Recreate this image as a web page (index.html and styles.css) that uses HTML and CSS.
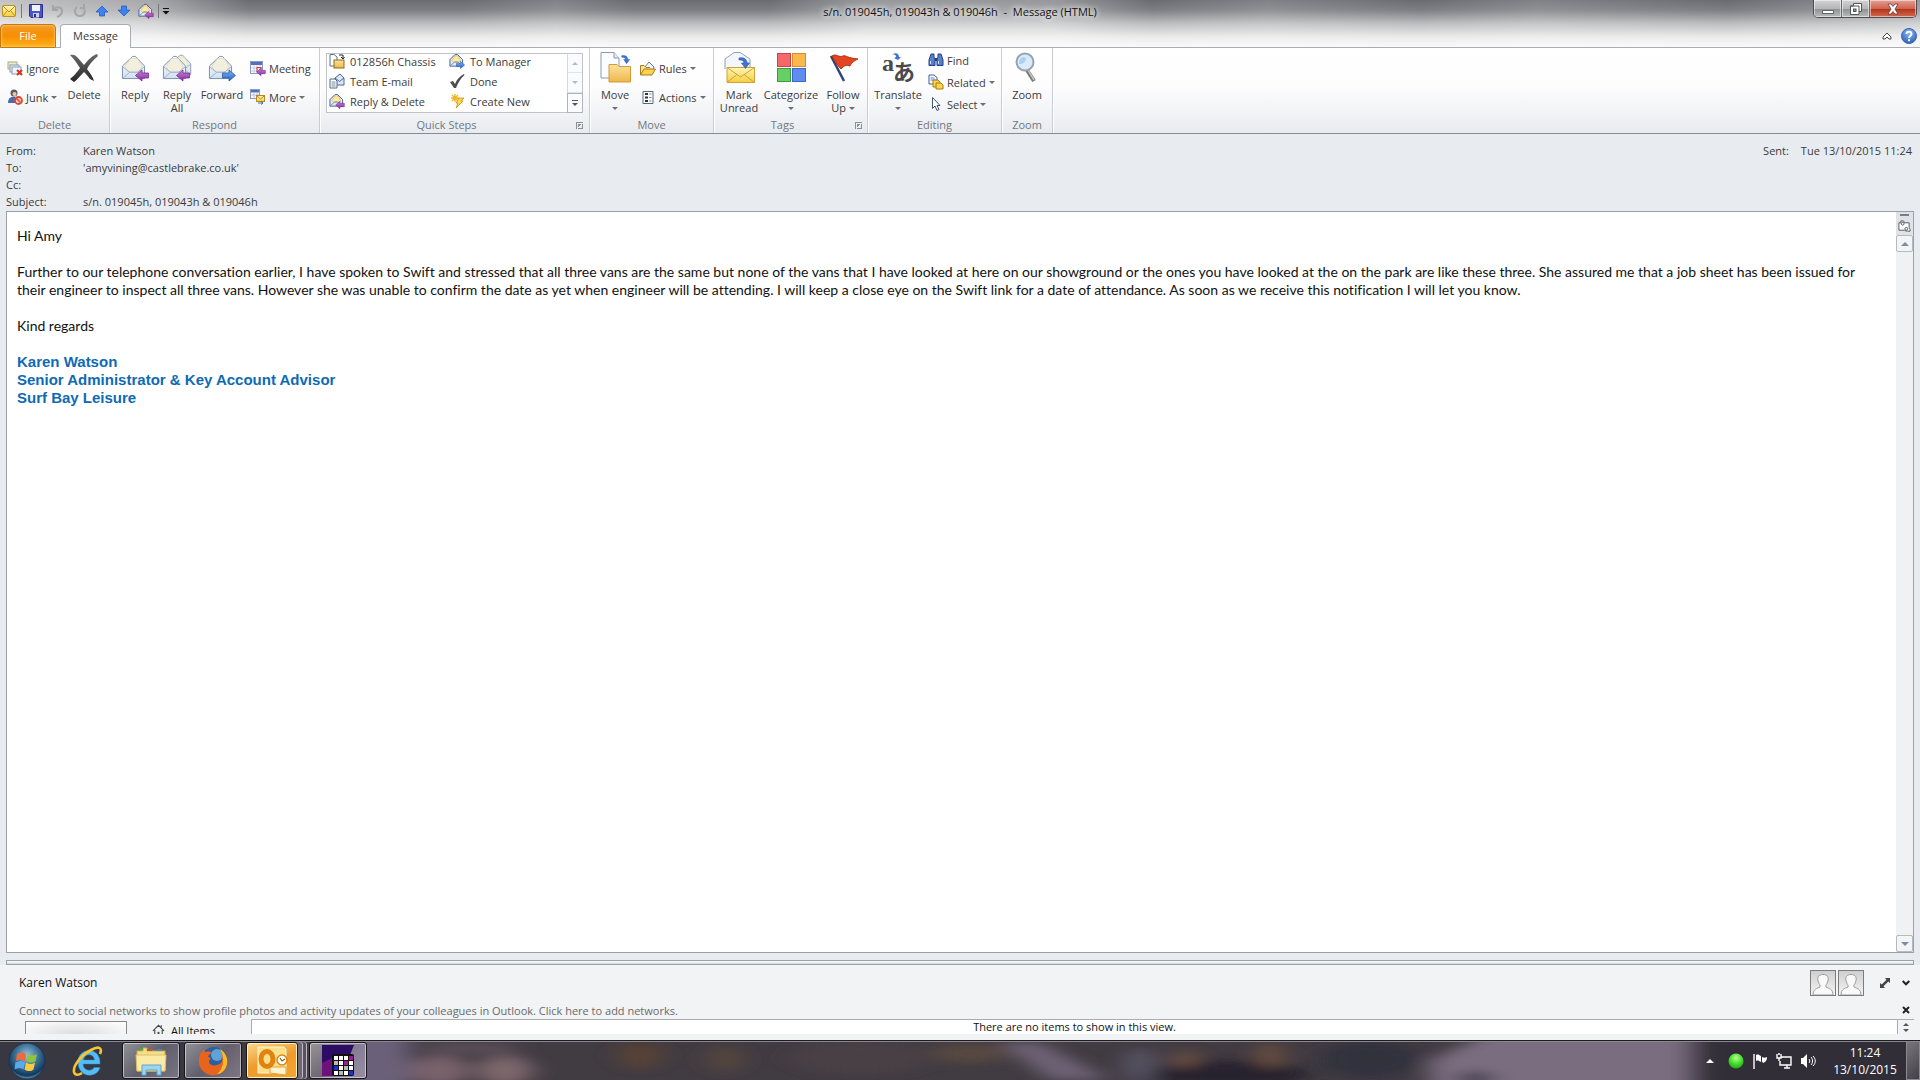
FILE: index.html
```html
<!DOCTYPE html>
<html lang="en">
<head>
<meta charset="utf-8">
<title>s/n. 019045h, 019043h &amp; 019046h - Message (HTML)</title>
<link rel="stylesheet" href="styles.css">
</head>
<body>
<svg class="defs" aria-hidden="true">
  <defs>
    <linearGradient id="gFold" x1="0" y1="0" x2="0" y2="1"><stop offset="0" stop-color="#fde39d"/><stop offset="1" stop-color="#efb64c"/></linearGradient>
    <linearGradient id="gEnv" x1="0" y1="0" x2="0" y2="1"><stop offset="0" stop-color="#ffffff"/><stop offset="1" stop-color="#cfe0f2"/></linearGradient>
    <linearGradient id="gYel" x1="0" y1="0" x2="0" y2="1"><stop offset="0" stop-color="#fff6b8"/><stop offset="1" stop-color="#f6cf3c"/></linearGradient>
    <linearGradient id="gPur" x1="0" y1="0" x2="0" y2="1"><stop offset="0" stop-color="#c77fd6"/><stop offset="1" stop-color="#8d2fa6"/></linearGradient>
    <linearGradient id="gBlu" x1="0" y1="0" x2="0" y2="1"><stop offset="0" stop-color="#7fb2f2"/><stop offset="1" stop-color="#2a62c4"/></linearGradient>
    <linearGradient id="gX" x1="0" y1="0" x2="0" y2="1"><stop offset="0" stop-color="#6b6b6b"/><stop offset="1" stop-color="#262626"/></linearGradient>
    <radialGradient id="gOrb" cx=".5" cy=".35" r=".65"><stop offset="0" stop-color="#9fc3d6"/><stop offset=".5" stop-color="#3b7096"/><stop offset=".85" stop-color="#14385c"/><stop offset="1" stop-color="#5aa5c8"/></radialGradient>
    <radialGradient id="gGreen" cx=".5" cy=".3" r=".7"><stop offset="0" stop-color="#b4ff8c"/><stop offset=".6" stop-color="#3fdc28"/><stop offset="1" stop-color="#25a816"/></radialGradient>
    <radialGradient id="gHelp" cx=".5" cy=".3" r=".7"><stop offset="0" stop-color="#8fb8f2"/><stop offset="1" stop-color="#2b62bd"/></radialGradient>
    <linearGradient id="gPerson" x1="0" y1="0" x2="0" y2="1"><stop offset="0" stop-color="#cfcfcf"/><stop offset="1" stop-color="#f4f4f4"/></linearGradient>
    <symbol id="openEnv" viewBox="0 0 26 26">
      <path d="M1.500 11.500 L12 1.500 H15 L24.500 11.500 V24.500 H1.500Z" fill="url(#gEnv)" stroke="#7d8fa6"/>
      <path d="M4 12 L10 3.500 H17 L22 12 L19 17 H7Z" fill="#f3efdf" stroke="#d5cdb4" stroke-width=".6"/>
      <path d="M1.500 12 L9 18 H17 L24.500 12 M1.500 24.500 L9 18 M24.500 24.500 L17 18" fill="none" stroke="#9fb0c6"/>
    </symbol>
    <symbol id="arrL" viewBox="0 0 14 12"><path d="M.5 6 L7 .5 V3.500 H13.500 V8.500 H7 V11.500Z" fill="url(#gPur)" stroke="#7a2a92" stroke-width=".8"/></symbol>
    <symbol id="arrR" viewBox="0 0 14 12"><path d="M13.500 6 L7 .5 V3.500 H.5 V8.500 H7 V11.500Z" fill="url(#gBlu)" stroke="#2a59ae" stroke-width=".8"/></symbol>
    <symbol id="curve" viewBox="0 0 12 12"><path d="M1 1 C6 0 9 2 9 6 H11.500 L7.500 11.500 L3.500 6 H6 C6 4 4 2.500 1 3Z" fill="#3f74d2" stroke="#2b56a8" stroke-width=".6"/></symbol>
    <symbol id="smEnv" viewBox="0 0 16 16">
      <path d="M1 7 L6.500 1.500 H9 L14.500 7 V14 H1Z" fill="#e3edf9" stroke="#3f5e93"/>
      <path d="M3 8 L6.500 3 H9.500 L12.500 8 L10 10 H5Z" fill="#ffe9a0" stroke="#c9a648" stroke-width=".6"/>
      <path d="M1 14 L6 9.500 H9.500 L14.500 14" fill="none" stroke="#6f8cb8"/>
    </symbol>
    <symbol id="person" viewBox="0 0 24 24"><path d="M2 24 C2 18 6 17.500 9 16 C9.500 15 9 14 8 12.500 C5 6 8 3.500 12 3.500 S19 6 16 12.500 C15 14 14.500 15 15 16 C18 17.500 22 18 22 24Z" fill="#f9f9f9" stroke="#9a9a9a"/></symbol>
  </defs>
</svg>

<header class="titlebar">
  <div class="caption">
    <div class="qat">
      <svg class="i14" viewBox="0 0 14 12"><rect x=".5" y=".5" width="13" height="11" rx="1" fill="url(#gYel)" stroke="#c08f1c"/><path d="M1 1 L7 7 L13 1 M1 11 L5 6 M13 11 L9 6" fill="none" stroke="#c08f1c"/></svg>
      <span class="vsep"></span>
      <button class="q" aria-label="Save"><svg viewBox="0 0 14 14"><path d="M.5 .5 H13.500 V13.500 H2 L.5 12Z" fill="#4c55c4" stroke="#2a2f8c"/><rect x="3" y="1" width="8" height="6" fill="#eef3fb"/><rect x="4" y="9" width="6" height="4.500" fill="#c7cdea"/><rect x="5" y="10" width="2" height="3" fill="#2a2f8c"/></svg></button>
      <button class="q" aria-label="Undo"><svg viewBox="0 0 14 14"><path d="M2 1 V6 H7 M2.500 5.500 C6 2 11 3 11 7 C11 10 9 12 6 13" fill="none" stroke="#a3a5a9" stroke-width="2"/></svg></button>
      <button class="q" aria-label="Redo"><svg viewBox="0 0 14 14"><path d="M4 3 C0 6 2 12 7 12 S13 6 10 3 M7 4 H11 V0" fill="none" stroke="#a3a5a9" stroke-width="2"/></svg></button>
      <button class="q" aria-label="Previous item"><svg viewBox="0 0 14 14"><path d="M7 2 L13 8 H9.500 V12 H4.500 V8 H1Z" fill="#3d82ee" stroke="#1f56b8" stroke-width=".7"/></svg></button>
      <button class="q" aria-label="Next item"><svg viewBox="0 0 14 14"><path d="M7 12 L13 6 H9.500 V2 H4.500 V6 H1Z" fill="#3d82ee" stroke="#1f56b8" stroke-width=".7"/></svg></button>
      <button class="q" aria-label="Reply and delete"><svg class="i16" viewBox="0 0 16 16"><use href="#smEnv" width="15" height="15"/><use href="#arrL" x="6" y="8" width="10" height="8"/></svg></button>
      <span class="vsep"></span>
      <button class="q slim" aria-label="Customize"><svg viewBox="0 0 8 8"><path d="M1 1.500 H7" stroke="#111" stroke-width="1"/><path d="M.5 4 H7.500 L4 7.500Z" fill="#111"/></svg></button>
    </div>
    <h1 class="doc-title">s/n. 019045h, 019043h &amp; 019046h&nbsp; -&nbsp; Message (HTML)</h1>
    <div class="winbtns">
      <button class="wb" aria-label="Minimize"><svg viewBox="0 0 12 12"><rect x=".5" y="7.500" width="11" height="3" fill="#fff" stroke="#666"/></svg></button>
      <button class="wb" aria-label="Restore"><svg viewBox="0 0 12 12"><path d="M3.500 .5 H11.500 V8.500 H9 V11.500 H.5 V3 H3.500Z" fill="#fff" stroke="#555"/><path d="M.5 3 H9 V9" fill="none" stroke="#555"/><rect x="3.500" y="6" width="2.500" height="2.500" fill="#999" stroke="#555"/></svg></button>
      <button class="wb close" aria-label="Close"><svg viewBox="0 0 12 12"><path d="M1 1 H4 L6 3.500 L8 1 H11 L8 6 L11 11 H8 L6 8.500 L4 11 H1 L4 6Z" fill="#fff" stroke="#6b3a3a" stroke-width=".8"/></svg></button>
    </div>
  </div>
  <nav class="tabs">
    <button class="tab file">File</button>
    <button class="tab active">Message</button>
    <div class="tabtools">
      <button class="q" aria-label="Minimize the ribbon"><svg viewBox="0 0 10 8"><path d="M1 5 L5 1 L9 5 V7 H7 L5 5 L3 7 H1Z" fill="#fff" stroke="#444"/></svg></button>
      <button class="q help" aria-label="Help"><svg viewBox="0 0 16 16"><circle cx="8" cy="8" r="7.500" fill="url(#gHelp)" stroke="#3466b4"/><path d="M5.500 6 C5.500 2.800 10.500 2.800 10.500 6 C10.500 8 8 8 8 10" fill="none" stroke="#fff" stroke-width="1.800"/><rect x="7" y="11.200" width="2" height="2" fill="#fff"/></svg></button>
    </div>
  </nav>
</header>

<section class="ribbon">
  <div class="group g-delete">
    <div class="tools">
      <div class="stack">
        <button class="small"><svg viewBox="0 0 16 16"><rect x="1" y="2" width="9" height="7" fill="#fbe9a8" stroke="#9aa"/><rect x="3" y="5" width="9" height="7" fill="#e8eff7" stroke="#889db8"/><rect x="5" y="7" width="9" height="7" fill="#f2f5fa" stroke="#889db8"/><path d="M10 10 L15 15 M15 10 L10 15" stroke="#d8321f" stroke-width="2"/></svg>Ignore</button>
        <button class="small"><svg viewBox="0 0 16 16"><circle cx="7" cy="4" r="3.500" fill="#555c66"/><path d="M1 14 C1 9 4 7 8 8 L10 10 V14Z" fill="#4a6bb0"/><circle cx="7.500" cy="5" r="2" fill="#f2c9a0"/><circle cx="11.500" cy="11.500" r="3.500" fill="#f5d2cc" stroke="#e0452c" stroke-width="1.800"/><path d="M9 9 L14 14" stroke="#e0452c" stroke-width="1.500"/></svg>Junk<i class="dd"></i></button>
      </div>
      <button class="large w-del"><svg viewBox="0 0 32 32"><path d="M2 3 C5 2 8 3 10 6 L16 13 C20 8 25 3 29 2 L30 4 C25 8 21 13 19 17 C22 21 25 25 26 29 L22 27 C20 24 18 22 16 20 C12 24 9 28 6 30 L2 27 C5 25 10 19 12 16 C10 13 7 8 2 3Z" fill="url(#gX)"/></svg><span>Delete</span></button>
    </div>
    <h2>Delete</h2>
  </div>
  <div class="group g-respond">
    <div class="tools">
      <button class="large"><svg viewBox="0 0 32 32"><use href="#openEnv" x="2" y="3" width="25" height="25"/><use href="#arrL" x="16" y="17" width="14" height="13"/></svg><span>Reply</span></button>
      <button class="large"><svg viewBox="0 0 32 32"><use href="#openEnv" x="9" y="1" width="22" height="24"/><use href="#openEnv" x="1" y="3" width="25" height="25"/><use href="#arrL" x="15" y="17" width="14" height="13"/></svg><span>Reply<br>All</span></button>
      <button class="large w-fwd"><svg viewBox="0 0 32 32"><use href="#openEnv" x="2" y="3" width="25" height="25"/><use href="#arrR" x="16" y="17" width="14" height="13"/></svg><span>Forward</span></button>
      <div class="stack">
        <button class="small"><svg viewBox="0 0 16 16"><rect x=".5" y="1.500" width="12" height="12" fill="#fff" stroke="#8a9ac0"/><rect x="1" y="2" width="11" height="3" fill="#4f71c4"/><path d="M1 8 H12 M1 11 H12 M4 5 V13 M7 5 V13 M10 5 V13" stroke="#b5bfdc" stroke-width=".8"/><rect x="7" y="7.500" width="4" height="4" fill="none" stroke="#d83a2c"/><use href="#arrL" x="6" y="8" width="10" height="8"/></svg>Meeting</button>
        <button class="small"><svg viewBox="0 0 16 16"><rect x=".5" y=".5" width="9" height="9" fill="#fff" stroke="#8a9ac0"/><rect x="1" y="1" width="8" height="2.500" fill="#4f71c4"/><path d="M1 6 H9 M4 3 V9 M7 3 V9" stroke="#b5bfdc"/><rect x="6.500" y="6.500" width="8" height="6" fill="url(#gYel)" stroke="#b58a24"/><path d="M7 7 L10.500 10 L14 7" fill="none" stroke="#b58a24"/><path d="M8 14 H13 L11 12.500 M13 14 L11 15.500" stroke="#3a6fd0" fill="none"/></svg>More<i class="dd"></i></button>
      </div>
    </div>
    <h2>Respond</h2>
  </div>
  <div class="group g-quick">
    <div class="gallery">
      <div class="steps">
        <button class="small"><svg viewBox="0 0 16 16"><path d="M1 1.500 H5 L8 4 V13 H1Z" fill="#fff" stroke="#5f7288"/><rect x="5" y="7" width="10" height="8" fill="url(#gFold)" stroke="#8c6a1e"/><path d="M10 2 H14 V5 M12 4 L14 6 L15.500 4" fill="none" stroke="#223" stroke-width="1"/></svg>012856h Chassis</button>
        <button class="small"><svg viewBox="0 0 16 16"><use href="#smEnv" width="15" height="15"/><use href="#arrR" x="7" y="8" width="9" height="8"/></svg>To Manager</button>
        <button class="small"><svg viewBox="0 0 16 16"><path d="M6 5 L11 1 L15 5 V12 H6Z" fill="#dbe7f7" stroke="#4b6796"/><path d="M6 5 L10.500 8.500 L15 5" fill="none" stroke="#4b6796"/><path d="M1 6 H6 L8 8 V15 H1Z" fill="#fff" stroke="#52698c"/><path d="M2.500 9 H6.500 M2.500 11 H6.500 M2.500 13 H6.500" stroke="#52698c" stroke-width=".8"/></svg>Team E-mail</button>
        <button class="small"><svg viewBox="0 0 16 16"><path d="M1 9 L4 8 L6 11 C8 6 11 3 15 1 L15.500 2 C11 6 9 10 7 15 H5Z" fill="#4d4d4d"/></svg>Done</button>
        <button class="small"><svg viewBox="0 0 16 16"><use href="#smEnv" width="15" height="15"/><use href="#arrL" x="6" y="8" width="10" height="8"/></svg>Reply &amp; Delete</button>
        <button class="small"><svg viewBox="0 0 16 16"><path d="M6 1 V9 M2 5 H10 M3 2 L9 8 M9 2 L3 8" stroke="#f0b722" stroke-width="1.400"/><path d="M10 5 H15 L12 8 H14 L7 15 L9 10 H7Z" fill="#fbd84c" stroke="#c98f16" stroke-width=".8"/></svg>Create New</button>
      </div>
      <div class="gscroll">
        <button aria-label="Row up"><i class="up dim"></i></button>
        <button aria-label="Row down"><i class="down dim"></i></button>
        <button class="more" aria-label="More quick steps"><i class="bar"></i><i class="down"></i></button>
      </div>
    </div>
    <h2 class="with-launch">Quick Steps<i class="launch"></i></h2>
  </div>
  <div class="group g-move">
    <div class="tools">
      <button class="large"><svg viewBox="0 0 32 32"><path d="M2 .5 H15 L20 6 V26 H2Z" fill="#fbfcfe" stroke="#8a9bb0"/><path d="M15 .5 V6 H20" fill="#dfe8f3" stroke="#8a9bb0"/><path d="M10 12.500 H18 L20 14.500 H31.500 V30 H10Z" fill="url(#gFold)" stroke="#d39b37"/><use href="#curve" x="22" y="2" width="9" height="11"/></svg><span>Move<br><i class="dd"></i></span></button>
      <div class="stack">
        <button class="small"><svg viewBox="0 0 16 16"><path d="M4 8 L9 2 L14 7 L12 12Z" fill="#eef3fb" stroke="#5f7aa8"/><path d="M.5 15 V5.500 H4 L6 7.500 H10" fill="#fbe39a" stroke="#a87a18"/><path d="M.5 15 L4 9 H15.500 L12 15Z" fill="#ffd34d" stroke="#a87a18"/></svg>Rules<i class="dd"></i></button>
        <button class="small"><svg viewBox="0 0 16 16"><path d="M3 2.500 H13 V14.500 H3Z" fill="#fff" stroke="#52698c"/><path d="M5 5 H8 M5 8.500 H8 M5 12 H8" stroke="#333" stroke-width="2"/><path d="M9 5 H11.500 M9 8.500 H11.500 M9 12 H11.500" stroke="#888"/></svg>Actions<i class="dd"></i></button>
      </div>
    </div>
    <h2>Move</h2>
  </div>
  <div class="group g-tags">
    <div class="tools">
      <button class="large"><svg viewBox="0 0 32 32"><path d="M2 17 V7 L11 .5 H17 L27 7 V17" fill="#f3f7fc" stroke="#8fa0b6"/><path d="M4 15.500 H31.500 V30.500 H4Z" fill="url(#gYel)" stroke="#cfa136"/><path d="M4 15.500 L17.500 25 L31.500 15.500 M4 30.500 L14 22.500 M31.500 30.500 L21 22.500" fill="none" stroke="#cfa136"/><use href="#curve" x="15" y="4" width="12" height="14"/></svg><span>Mark<br>Unread</span></button>
      <button class="large w-cat"><svg viewBox="0 0 32 32"><rect x="2.500" y="1.500" width="13" height="13" fill="#f4676b" stroke="#cc4248"/><rect x="17.500" y="1.500" width="13" height="13" fill="#fbb84c" stroke="#d3902a"/><rect x="2.500" y="16.500" width="13" height="13" fill="#66cf66" stroke="#3a9c3e"/><rect x="17.500" y="16.500" width="13" height="13" fill="#5f8cf0" stroke="#3d66c8"/></svg><span>Categorize<br><i class="dd"></i></span></button>
      <button class="large w-fol"><svg viewBox="0 0 32 32"><path d="M4 4 L17 29" stroke="#2f4574" stroke-width="2.500"/><path d="M5 4 C9 1 12 6 16 4 C19 3 20 6 31 7 C26 9 24 12 23 14 C20 13 17 13 14 17 C11 14 9 11 5 4Z" fill="#e2451f" stroke="#b52f14"/></svg><span>Follow<br>Up <i class="dd"></i></span></button>
    </div>
    <h2 class="with-launch">Tags<i class="launch"></i></h2>
  </div>
  <div class="group g-edit">
    <div class="tools">
      <button class="large w-tra"><svg class="glyphs" viewBox="0 0 32 32"><text x="0" y="19" font-family="Liberation Serif, serif" font-weight="bold" font-size="24" fill="#4a4a4a">a</text><text x="11" y="28" font-family="Noto Sans CJK JP, sans-serif" font-size="22" font-weight="bold" fill="#4a4a4a">あ</text><path d="M10 3 C13 0 17 1 17 5 H19 L16 8 L12 6 L14 5 C14 3 13 2 10 3Z" fill="#3f74d2"/></svg><span>Translate<br><i class="dd"></i></span></button>
      <div class="stack three">
        <button class="small"><svg viewBox="0 0 16 16"><path d="M3 2 H6 V5 L7 7 V13.500 H1 V8Z M10 2 H13 L15 8 V13.500 H9 V7 L10 5Z" fill="#5b7fc7" stroke="#1f3f86"/><path d="M7 6 H9 V9 H7Z" fill="#1f3f86"/><path d="M2.500 9 V12 M10.500 9 V12" stroke="#cfe0ff"/></svg>Find</button>
        <button class="small"><svg viewBox="0 0 16 16"><path d="M1 1 H6 L9 3.500 V10 H1Z" fill="#fff" stroke="#3f5e93"/><path d="M2.500 4 H6.500 M2.500 6 H7.500" stroke="#5b7fc7"/><path d="M5 6 H10 L12 8 V13 H5Z" fill="#ffd34d" stroke="#a87a18"/><path d="M8 9 H13 L15 11 V15 H8Z" fill="#ffd34d" stroke="#a87a18"/></svg>Related<i class="dd"></i></button>
        <button class="small"><svg viewBox="0 0 16 16"><path d="M4.500 1.500 V12.500 L7 10 L9 14.500 L11 13.500 L9 9.500 H12Z" fill="#fff" stroke="#44557a"/></svg>Select<i class="dd"></i></button>
      </div>
    </div>
    <h2>Editing</h2>
  </div>
  <div class="group g-zoom">
    <div class="tools">
      <button class="large"><svg viewBox="0 0 32 32"><path d="M16 18 L23 29" stroke="#777" stroke-width="4"/><path d="M17 18 L23 28" stroke="#c4c4c4" stroke-width="1.500"/><circle cx="14" cy="10" r="8.500" fill="#d9ebfb" stroke="#9aa3ad" stroke-width="2"/><path d="M8 12 C8 6 12 4 15 6 C15 10 12 12 8 12Z" fill="#a8d0f5"/></svg><span>Zoom</span></button>
    </div>
    <h2>Zoom</h2>
  </div>
</section>

<section class="headers">
  <dl>
    <dt>From:</dt><dd>Karen Watson</dd>
    <dt>To:</dt><dd>'amyvining@castlebrake.co.uk'</dd>
    <dt>Cc:</dt><dd></dd>
    <dt>Subject:</dt><dd>s/n. 019045h, 019043h &amp; 019046h</dd>
  </dl>
  <p class="sent"><span>Sent:</span><span>Tue 13/10/2015 11:24</span></p>
</section>

<main class="message">
  <article>
    <p>Hi Amy</p>
    <p>Further to our telephone conversation earlier, I have spoken to Swift and stressed that all three vans are the same but none of the vans that I have looked at here on our showground or the ones you have looked at the on the park are like these three. She assured me that a job sheet has been issued for<br>their engineer to inspect all three vans. However she was unable to confirm the date as yet when engineer will be attending. I will keep a close eye on the Swift link for a date of attendance. As soon as we receive this notification I will let you know.</p>
    <p>Kind regards</p>
    <p class="sig">Karen Watson<br>Senior Administrator &amp; Key Account Advisor<br>Surf Bay Leisure</p>
  </article>
  <div class="vscroll">
    <div class="split"><i></i><svg viewBox="0 0 14 14"><path d="M1 3 H3 V1 H6 L7 3 H12 V8 L13 10 V12 H10 L9 12 L7 11 H1Z" fill="#fff" stroke="#555"/><circle cx="5" cy="4" r="1.500" fill="none" stroke="#555"/><circle cx="9" cy="9.500" r="1.500" fill="none" stroke="#555"/></svg></div>
    <button aria-label="Scroll up"><i class="up"></i></button>
    <div class="track"></div>
    <button aria-label="Scroll down"><i class="down"></i></button>
  </div>
</main>
<div class="splitter"></div>

<section class="people">
  <div class="who">
    <span class="name">Karen Watson</span>
    <span class="faces">
      <svg class="face" viewBox="0 0 24 24"><rect width="24" height="24" fill="url(#gPerson)"/><use href="#person" width="24" height="24"/></svg>
      <svg class="face" viewBox="0 0 24 24"><rect width="24" height="24" fill="url(#gPerson)"/><use href="#person" width="24" height="24"/></svg>
    </span>
    <button class="q" aria-label="Expand"><svg viewBox="0 0 10 10"><path d="M5 0 H10 V5 L8.300 3.500 L3.500 8.300 L5 10 H0 V5 L1.700 6.500 L6.500 1.700Z" fill="#444"/></svg></button>
    <button class="q sm" aria-label="Collapse"><svg viewBox="0 0 8 6"><path d="M.7 1 L4 4.300 L7.300 1" fill="none" stroke="#222" stroke-width="2"/></svg></button>
  </div>
  <div class="connect">
    <a href="#">Connect to social networks to show profile photos and activity updates of your colleagues in Outlook. Click here to add networks.</a>
    <button class="q sm" aria-label="Close"><svg viewBox="0 0 8 8"><path d="M1 1 L7 7 M7 1 L1 7" stroke="#222" stroke-width="2"/></svg></button>
  </div>
  <div class="items">
    <div class="thumb"></div>
    <div class="all"><svg viewBox="0 0 14 12"><path d="M1 7 L7 1 L13 7 M3 6 V11.500 M11 6 V11.500 M10 1 V3" fill="none" stroke="#444" stroke-width="1.200"/><rect x="6" y="8" width="2" height="4" fill="#444"/></svg>All Items</div>
    <div class="list">There are no items to show in this view.</div>
    <div class="spin"><i class="up"></i><i class="down"></i></div>
  </div>
</section>

<footer class="taskbar">
  <svg class="wall" viewBox="0 0 1920 40" preserveAspectRatio="none" aria-hidden="true">
    <defs><filter id="soft" x="-20%" y="-50%" width="140%" height="200%"><feGaussianBlur stdDeviation="12 5"/></filter></defs>
    <rect width="1920" height="40" fill="#413b42"/>
    <g filter="url(#soft)">
      <rect x="-40" y="-10" width="260" height="60" fill="#383742"/>
      <rect x="330" y="-10" width="80" height="60" fill="#6b6079"/>
      <ellipse cx="440" cy="30" rx="30" ry="16" fill="#79626a"/>
      <ellipse cx="505" cy="30" rx="28" ry="16" fill="#7c666c"/>
      <ellipse cx="470" cy="6" rx="50" ry="6" fill="#5c4f5a"/>
      <ellipse cx="640" cy="14" rx="22" ry="14" fill="#594335"/>
      <ellipse cx="725" cy="18" rx="16" ry="14" fill="#56473c"/>
      <ellipse cx="860" cy="16" rx="70" ry="18" fill="#4a4145"/>
      <ellipse cx="970" cy="12" rx="40" ry="10" fill="#57483f"/>
      <path d="M1000 0 H1040 L1110 40 H1050Z" fill="#6d6274"/>
      <ellipse cx="1140" cy="24" rx="16" ry="18" fill="#575263"/>
      <ellipse cx="1230" cy="34" rx="80" ry="14" fill="#26232e"/>
      <ellipse cx="1185" cy="18" rx="10" ry="10" fill="#735240"/>
      <ellipse cx="1270" cy="14" rx="12" ry="14" fill="#6d4f3e"/>
      <ellipse cx="1370" cy="18" rx="50" ry="20" fill="#32303c"/>
      <path d="M1490 -10 H1690 V50 H1430 V20Z" fill="#7a6d80"/>
      <ellipse cx="1475" cy="38" rx="20" ry="7" fill="#45404f"/>
      <rect x="1700" y="-10" width="260" height="60" fill="#332e38"/>
    </g>
  </svg>
  <button class="orb" aria-label="Start"><svg viewBox="0 0 38 38"><circle cx="19" cy="19" r="18" fill="url(#gOrb)" stroke="#1f3346"/><path d="M9 12 C12 10 15 10 18 12 L17 19 C14 17 11 17 8 19Z" fill="#f0693a"/><path d="M19.500 12 C23 14 26 14 29 12 L27.500 19 C25 21 22 21 18.500 19Z" fill="#8cc63f"/><path d="M7.500 20.500 C11 18.500 14 18.500 17 20.500 L15.500 27.500 C13 25.500 10 25.500 6.500 27.500Z" fill="#5aa9ea"/><path d="M18 20.500 C21 22.500 24 22.500 27 20.500 L25.500 27.500 C23 29.500 20 29.500 16.500 27.500Z" fill="#fbc93c"/></svg></button>
  <button class="pin" aria-label="Internet Explorer"><svg viewBox="0 0 32 32"><path d="M28 19 H11 C11 26 20 27 22 22.500 H28 C25 34 6 33 6 17 C6 2 29 1 28 19Z M11.500 15 H22.500 C22 8 12 8 11.500 15Z" fill="#55bdf3" fill-rule="evenodd" stroke="#2b8fd0" stroke-width=".5"/><path d="M28 9 C31 2 26 1 19 5 C8 11 1 21 2 27 C3 31 7 30 10 28" fill="none" stroke="#f7c62e" stroke-width="2.600"/></svg></button>
  <button class="task" aria-label="Windows Explorer"><svg viewBox="0 0 32 32"><path d="M2 6 H8 V3 H12 V6 H30 V26 H2Z" fill="#f5de88" stroke="#cfae4c"/><rect x="4" y="3" width="4" height="2" fill="#3cae3c"/><rect x="12" y="4" width="5" height="2" fill="#d94a3a"/><rect x="22" y="4" width="5" height="2" fill="#4b7fd6"/><path d="M1 10 H31 L30 26 H2Z" fill="#fbeaa4" stroke="#dcc067"/><path d="M7 30 V20 H26 V30 H22 V25 H11 V30Z" fill="#9fd4f0" stroke="#5da7d0"/></svg></button>
  <button class="task" aria-label="Firefox"><svg viewBox="0 0 32 32"><circle cx="17" cy="15" r="13" fill="#2b5f9e"/><circle cx="20" cy="10" r="6" fill="#5fa3d8"/><path d="M3 9 C5 7 6 5 7 4 C7 6 8 7 9 7 C12 6 15 7 15 8 C13 9 11 10 11 12 C14 12 14 14 12 16 C12 21 19 22 24 18 C26 15 26 9 23 4 C31 9 32 18 28 24 C22 33 8 32 3 22 C1 17 2 12 3 9Z" fill="#e8641b"/><path d="M23 4 C31 9 32 18 28 24 C26 27 23 29 20 29 C27 24 28 12 23 4Z" fill="#fbb829"/></svg></button>
  <button class="task hot" aria-label="Outlook"><svg viewBox="0 0 32 32"><path d="M2 2 H28 L30 4 V28 H2Z" fill="#fbe08c" stroke="#fff6d0"/><path d="M14 22 L30 22 V30 L14 28Z" fill="#fff3cf" stroke="#e0a53c"/><ellipse cx="11" cy="14" rx="6" ry="7.500" fill="none" stroke="#e2820f" stroke-width="5"/><circle cx="26" cy="15" r="5" fill="#fff" stroke="#e2820f" stroke-width="1.500"/><path d="M24 13 L26 16 L29 14" fill="none" stroke="#8a5a12" stroke-width="1.200"/></svg></button>
  <button class="task" aria-label="Grid application"><svg viewBox="0 0 32 32"><path d="M0 0 H32 L28 10 L24 18 L10 31 H0Z" fill="#2d0c66"/><path d="M0 18 L12 12 V31 H0Z" fill="#6d127c"/><rect x="10" y="9" width="22" height="22" rx="2" fill="#111"/><g fill="#fff"><path d="M12 11h4v4h-4z M17 11h4v4h-4z M22 11h4v4h-4z M17 16h4v4h-4z M27 16h4v4h-4z M17 21h4v4h-4z M22 26h4v4h-4z M12 26h4v4h-4z"/></g><path d="M12 16h4v4h-4z M22 21h4v4h-4z M17 26h4v4h-4z" fill="#b9b9b9"/><path d="M27 11h4v4h-4z M22 16h4v4h-4z" fill="#9c1d8c"/><path d="M12 21h4v4h-4z M27 26h4v4h-4z" fill="#2030d0"/><path d="M27 21h4v4h-4z" fill="#fff"/></svg></button>
  <div class="tray">
    <i class="up light"></i>
    <svg class="t16" viewBox="0 0 16 16"><circle cx="8" cy="8" r="7.500" fill="url(#gGreen)"/></svg>
    <svg class="t16" viewBox="0 0 16 16"><path d="M2 1 V16" stroke="#fff" stroke-width="1.400"/><path d="M4 2 C6 1 7 2 9 3 V9 C7 8 6 7 4 8Z M10 4 C12 5 13 5 15 4 C15 7 14 8 13 9 C12 10 11 10 10 9Z" fill="#fff"/></svg>
    <svg class="t16" viewBox="0 0 16 16"><path d="M5 4 H15 V12 H4 V8 M8 15 H14 M11 12 V15 M1 1 V5 H5 V1 M3 5 V8 M2 1 H4" fill="none" stroke="#fff" stroke-width="1.400"/></svg>
    <svg class="t16" viewBox="0 0 16 16"><path d="M1 5 H3 L7 1 V15 L3 11 H1Z" fill="#fff"/><path d="M9 6 C10 7 10 9 9 10 M11 4 C13 6 13 10 11 12 M13 3 C16 6 16 10 13 13" fill="none" stroke="#fff"/></svg>
    <time>11:24<br>13/10/2015</time>
    <button class="desk" aria-label="Show desktop"></button>
  </div>
</footer>
</body>
</html>
```
FILE: styles.css
```css
* { box-sizing: border-box; }
body {
  margin: 0;
  height: 100vh;
  display: flex;
  flex-direction: column;
  overflow: hidden;
  background: #e8ecf1;
  color: #3b3b3b;
  font: 11px/13px "Open Sans", "Noto Sans", sans-serif;
}
h1, h2, p, dl, dd { margin: 0; font: inherit; }
button { border: 0; padding: 0; background: none; color: inherit; font: inherit; }
svg { display: block; flex: none; }
.defs { position: absolute; width: 0; height: 0; }

/* small triangles */
.dd, .up, .down {
  display: inline-block;
  width: 0;
  height: 0;
  border: 3px solid transparent;
  border-bottom-width: 0;
  border-top-color: #6a6e75;
  vertical-align: middle;
}
.down { border-top-color: #555; }
.up { border-width: 0 3px 3px; border-bottom-color: #555; }
.up.dim { border-bottom-color: #b5b9bf; }
.down.dim { border-top-color: #b5b9bf; }

/* title bar */
.titlebar {
  height: 48px;
  flex: none;
  display: flex;
  flex-direction: column;
  border-bottom: 1px solid #a9acb1;
  background:
    linear-gradient(90deg, rgba(255,255,255,.6), rgba(255,255,255,.4) 8%, rgba(255,255,255,0) 13%, rgba(255,255,255,0) 24%, rgba(255,255,255,.15) 29%, rgba(255,255,255,0) 33%, rgba(255,255,255,0) 40%, rgba(255,255,255,.3) 45%, rgba(255,255,255,.3) 55%, rgba(255,255,255,0) 60%, rgba(255,255,255,.15) 66%, rgba(255,255,255,0) 74%, rgba(255,255,255,.15) 80%, rgba(255,255,255,0) 90%, rgba(255,255,255,.3)),
    linear-gradient(#6a6b70, #7e7f84 22%, #bcbdbf 50%, #eaeaea 78%, #fafafa);
}
.caption {
  height: 24px;
  display: grid;
  grid-template-columns: 1fr auto 1fr;
}
.qat { display: flex; align-items: center; gap: 8px; padding: 0 0 2px 2px; }
.q { width: 14px; height: 14px; flex: none; display: flex; align-items: center; justify-content: center; }
.q svg { width: 14px; height: 14px; }
.q .i16 { width: 16px; height: 16px; }
.q.slim { width: 8px; margin-left: -4px; }
.q.slim svg { width: 8px; }
.i14 { width: 14px; height: 12px; }
.vsep { width: 1px; height: 14px; margin: 0 -1px 0 -3px; background: #77797d; }
.doc-title { align-self: center; padding-bottom: 2px; color: #111; text-shadow: 0 0 6px #fff, 0 0 6px #fff; }
.winbtns {
  justify-self: end;
  height: 18px;
  margin-right: 3px;
  display: flex;
  border: 1px solid #4b4d52;
  border-top: 0;
  border-radius: 0 0 5px 5px;
  overflow: hidden;
}
.wb {
  width: 28px;
  display: flex;
  align-items: center;
  justify-content: center;
  border-right: 1px solid #67696e;
  box-shadow: inset 0 0 0 1px rgba(255,255,255,.5);
  background: linear-gradient(#d3d3d5, #b5b6b8 50%, #8f9093 51%, #b9babc);
}
.wb svg { width: 12px; height: 12px; }
.wb.close { width: 46px; border: 0; background: linear-gradient(#e3a196, #cf6450 50%, #b23016 51%, #cf6a50); }

.tabs { flex: 1; display: flex; gap: 4px; margin-bottom: -1px; }
.tab { height: 24px; padding: 0 0 2px; border-radius: 4px 4px 0 0; }
.file {
  width: 56px;
  color: #fff;
  border: 1px solid #c97a08;
  background: linear-gradient(#f39a2a, #f78f00 50%, #ffb01e);
  box-shadow: inset 0 0 3px #ffe08c;
}
.active { width: 71px; background: #fff; border: 1px solid #a9acb1; border-bottom: 0; }
.tabtools { margin-left: auto; display: flex; align-items: center; gap: 7px; padding-right: 3px; }
.tabtools .q svg { width: 10px; }
.tabtools .help, .tabtools .help svg { width: 16px; height: 16px; }

/* ribbon */
.ribbon {
  flex: none;
  height: 86px;
  display: flex;
  border-bottom: 1px solid #868b92;
  background: linear-gradient(#fff, #fdfdfe 45%, #e8ebef);
}
.group {
  display: flex;
  flex-direction: column;
  border-right: 1px solid #c9cdd3;
  box-shadow: 1px 0 #fff;
}
.group h2 {
  position: relative;
  line-height: 16px;
  text-align: center;
  color: #72777e;
}
.group .with-launch { padding-right: 16px; }
.tools { flex: 1; display: flex; padding: 4px 0 0 4px; }
.g-delete { width: 110px; }
.g-delete .tools { padding-left: 3px; gap: 2px; }
.g-respond { width: 210px; }
.g-quick { width: 270px; padding: 0 6px; }
.g-move { width: 124px; }
.g-tags { width: 154px; }
.g-edit { width: 134px; }
.g-zoom { width: 51px; }
.stack { display: flex; flex-direction: column; gap: 13px; padding: 8px 0 0 4px; }
.stack.three { gap: 6px; padding-top: 0; }
.small { height: 16px; display: flex; align-items: center; gap: 3px; white-space: nowrap; }
.small svg { width: 16px; height: 16px; }
.large {
  width: 42px;
  flex: none;
  display: flex;
  flex-direction: column;
  align-items: center;
  justify-content: flex-start;
  gap: 4px;
  white-space: nowrap;
}
.large svg { width: 32px; height: 32px; }
.large .glyphs { overflow: visible; }
.large .dd { vertical-align: 2px; }
.w-del { width: 46px; }
.w-fwd { width: 48px; }
.w-cat { width: 62px; }
.w-tra { width: 52px; }
.gallery {
  height: 60px;
  margin: 5px 0 4px;
  display: flex;
  border: 1px solid #c0c4ca;
  background: #fff;
}
.steps { flex: 1; display: grid; grid-template-columns: 120px 1fr; grid-auto-rows: 20px; align-content: center; align-items: start; }
.steps .small { padding-left: 2px; gap: 5px; }
.gscroll { width: 15px; display: flex; flex-direction: column; border-left: 1px solid #d5d8dc; }
.gscroll button { flex: 1; display: flex; flex-direction: column; align-items: center; justify-content: center; gap: 2px; border-bottom: 1px solid #e1e3e6; background: #fafbfc; }
.gscroll .more { border: 1px solid #b0b4ba; margin: 0 -1px -1px; }
.bar { width: 6px; height: 1px; background: #555; }
.launch { position: absolute; right: 5px; bottom: 4px; width: 7px; height: 7px; border: solid #8a8f96; border-width: 1px 0 0 1px; }
.launch::after { content: ""; position: absolute; right: 0; bottom: 0; width: 4px; height: 4px; border: solid #8a8f96; border-width: 0 1px 1px 0; background: linear-gradient(135deg, #8a8f96 50%, transparent 50%); }
.g-quick .launch { right: 0; }

/* message headers */
.headers { flex: none; display: flex; justify-content: space-between; padding: 8px 8px 1px 6px; line-height: 17px; }
dl { display: grid; grid-template-columns: 77px auto; grid-auto-rows: 17px; }
.sent { display: flex; gap: 12px; }

/* message body */
.message { flex: 1; min-height: 0; margin: 0 6px; display: flex; border: 1px solid #9aa1aa; background: #fff; }
article { flex: 1; padding: 15px 10px; color: #111; font: 14px/18px Lato, "Open Sans", sans-serif; font-variant-ligatures: none; }
article p { margin-bottom: 18px; white-space: nowrap; }
.sig { color: #0f6ab4; font: bold 15px/18px "Liberation Sans", Arial, sans-serif; }
.vscroll { width: 17px; display: flex; flex-direction: column; background: #f0f1f3; }
.vscroll button { height: 17px; display: flex; align-items: center; justify-content: center; border: 1px solid #b4b9c0; border-radius: 2px; background: #f3f4f6; }
.vscroll .up { border-width: 0 4px 4px; border-bottom-color: #7f8ba6; }
.vscroll .down { border-width: 4px 4px 0; border-top-color: #7f8ba6; }
.split { height: 23px; display: flex; flex-direction: column; align-items: center; gap: 4px; padding-top: 2px; background: #dfe2e7; }
.split i { width: 9px; height: 2px; background: #7a8088; }
.split svg { width: 13px; height: 13px; }
.track { flex: 1; }
.splitter { flex: none; height: 5px; margin: 7px 6px 0; border: 1px solid #9aa1aa; background: linear-gradient(#fff, #d3d8de); }

/* people pane */
.people { flex: none; height: 75px; display: flex; flex-direction: column; background: #f1f3f5; color: #111; }
.who { height: 36px; display: flex; align-items: center; padding: 0 10px 1px 19px; }
.name { font-size: 12px; }
.faces { margin: 0 14px 0 auto; display: flex; gap: 2px; }
.face { width: 26px; height: 26px; border: 1px solid #7c7c7c; }
.people .q svg { width: 10px; height: 10px; }
.people .q.sm { width: 8px; margin-left: 10px; }
.people .q.sm svg { width: 8px; height: 8px; }
.connect { height: 18px; display: flex; align-items: center; justify-content: space-between; padding: 0 10px 0 19px; }
.connect a { color: #6a6a6a; text-decoration: none; }
.items { height: 15px; margin-right: 6px; display: flex; overflow: hidden; }
.thumb { width: 102px; margin: 2px 25px 0; border: 1px solid #888; border-bottom: 0; background: radial-gradient(ellipse at bottom, #ddd, #fff); }
.all { width: 99px; display: flex; align-items: flex-start; gap: 6px; padding-top: 5px; }
.all svg { width: 13px; height: 12px; }
.list { flex: 1; border: 1px solid #a9acb1; border-bottom: 0; background: #fff; text-align: center; line-height: 14px; }
.spin { width: 16px; display: flex; flex-direction: column; align-items: center; justify-content: center; gap: 3px; border-top: 1px solid #a9acb1; }

/* taskbar */
.taskbar { position: relative; z-index: 0; flex: none; height: 40px; display: flex; align-items: stretch; gap: 4px; border-top: 1px solid #1e1c22; overflow: hidden; color: #fff; }
.wall { position: absolute; inset: 0; z-index: -1; width: 100%; height: 100%; border-top: 1px solid #8d8890; }
.orb { width: 54px; display: flex; align-items: center; justify-content: center; }
.orb svg { width: 38px; height: 38px; }
.pin { width: 60px; display: flex; align-items: center; justify-content: center; }
.task { width: 58px; margin: 1px 0; display: flex; align-items: center; justify-content: center; border: 1px solid #17161a; border-radius: 3px; box-shadow: inset 0 0 0 1px rgba(255,255,255,.5); background: linear-gradient(135deg, rgba(255,255,255,.45), rgba(190,180,205,.3) 50%, rgba(220,210,230,.4)); }
.task svg, .pin svg { width: 32px; height: 32px; }
.task.hot { width: 52px; margin-right: 7px; background: linear-gradient(160deg, #fbd98c, #ef9a2c 50%, #f5a630); box-shadow: inset 0 0 0 1px #fff2c8, 4px 0 #6e6874, 5px 0 #c0bbc6, 8px 0 #57525e, 9px 0 #c0bbc6; }
.tray { margin-left: auto; display: flex; align-items: center; gap: 8px; }
.up.light { border-width: 0 4px 4px; border-bottom-color: #fff; margin-right: 6px; }
.t16 { width: 16px; height: 16px; }
time { width: 82px; margin-right: -8px; text-align: center; font-size: 12px; line-height: 17px; }
.desk { width: 14px; align-self: stretch; border: 1px solid #8d8890; background: linear-gradient(135deg, rgba(255,255,255,.35), rgba(255,255,255,.08)); }
```
